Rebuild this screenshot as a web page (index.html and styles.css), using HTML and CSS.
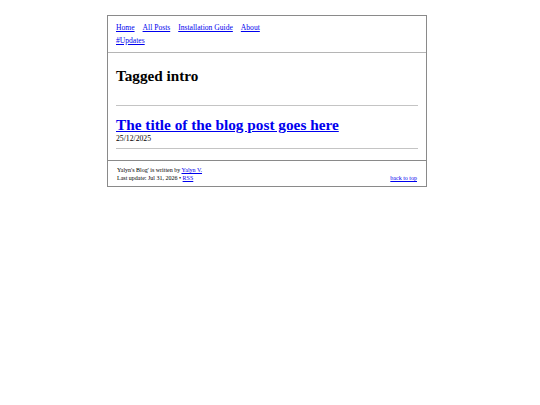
FILE: index.html
```html
<!DOCTYPE html>
<html>
<head>
<meta charset="utf-8">
<link rel="stylesheet" href="styles.css">
</head>
<body>
<div class="page">
  <header class="head">
    <nav class="nav">
      <a href="#">Home</a>
      <a href="#">All Posts</a>
      <a href="#">Installation Guide</a>
      <a href="#">About</a>
    </nav>
    <div class="tags"><a href="#">#Updates</a></div>
  </header>
  <main class="main">
    <h1 class="title">Tagged intro</h1>
    <hr class="rule">
    <article class="post">
      <h2 class="post-title"><a href="#">The title of the blog post goes here</a></h2>
      <div class="date">25/12/2025</div>
    </article>
    <hr class="rule">
  </main>
  <footer class="foot">
    <div class="foot-left">
      <div>Yalyn's Blog' is written by <a href="#">Yalyn V.</a></div>
      <div>Last update: Jul 31, 2026 • <a href="#">RSS</a></div>
    </div>
    <a class="top" href="#">back to top</a>
  </footer>
</div>
</body>
</html>
```

FILE: styles.css
```css
html, body {
  margin: 0;
  padding: 0;
  background: #fff;
}
body {
  font-family: "Liberation Serif", "Times New Roman", serif;
  color: #000;
}
a, a:visited {
  color: #0000ee;
}
.page {
  width: 318px;
  margin: 15px 0 0 107px;
  border: 1px solid #8a8a8a;
}
.head {
  padding: 6px 8px 5px;
  border-bottom: 1px solid #b5b5b5;
  font-size: 7.6px;
  line-height: 12px;
}
.nav {
  display: flex;
  gap: 8px;
}
.tags {
  margin-top: 1px;
}
.main {
  padding: 0 8px;
}
.title {
  font-size: 15.2px;
  font-weight: bold;
  margin: 13px 0 0;
  line-height: 20px;
}
.rule {
  border: 0;
  border-top: 1px solid #c4c4c4;
  margin: 19px 0 0;
}
.post {
  padding-top: 10px;
}
.post-title {
  margin: 0;
  font-size: 15.3px;
  line-height: 18px;
}
.date {
  font-size: 7.7px;
  line-height: 9px;
}
.post + .rule {
  margin-top: 5px;
  margin-bottom: 11px;
}
.foot {
  border-top: 1px solid #8a8a8a;
  padding: 5px 9px 4px;
  display: flex;
  justify-content: space-between;
  align-items: flex-end;
  font-size: 6px;
  line-height: 8px;
}
```
